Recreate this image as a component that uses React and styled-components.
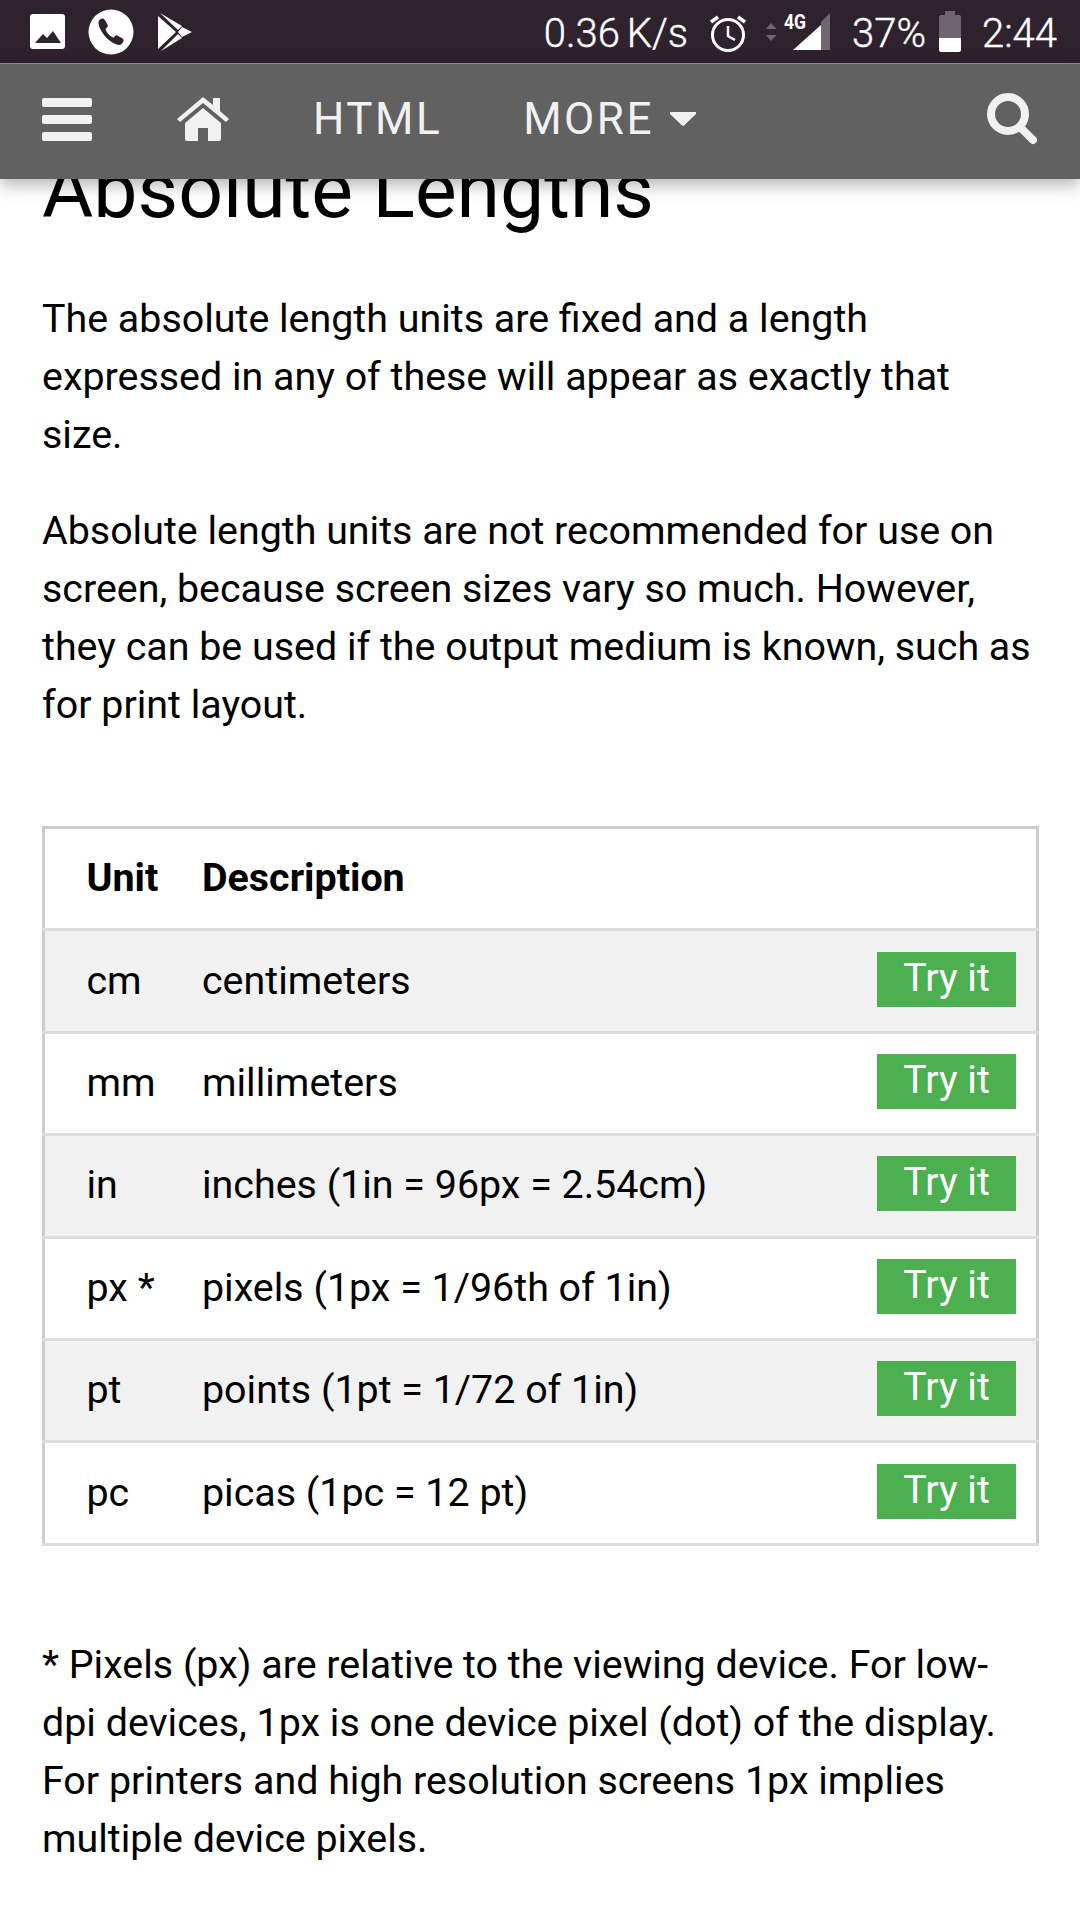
import React from 'react'
import styled, {createGlobalStyle} from 'styled-components'

const GlobalStyle = createGlobalStyle`
html, body {
  margin: 0;
  padding: 0;
  background: #fff;
}
body {
  font-family: Roboto, "Liberation Sans", sans-serif;
  color: #000;
}
`

const Page = styled.div`
width: 1080px;
height: 1920px;
overflow: hidden;
position: relative;
background: #fff;
`

const TopArea = styled.header`
position: absolute;
top: 0;
left: 0;
width: 1080px;
z-index: 2;
`

const StatusBar = styled.div`
height: 63px;
background: #2e222e;
display: flex;
align-items: center;
color: #fff;
padding: 0 23px 0 30px;
box-sizing: border-box;
`

const StatusText = styled.span`
font-size: 40px;
font-weight: 300;
-webkit-text-stroke: 0.4px #fff;
position: relative;
top: 2px;
word-spacing: -3px;
margin-left: ${p => p.$left || 0}px;
white-space: nowrap;
`

const StatusIcon = styled.svg`
display: block;
flex: none;
margin-left: ${p => p.$left || 0}px;
`

const Spacer = styled.div`
flex: 1;
`

const NavBar = styled.nav`
height: 110px;
background: #616161;
border-top: 1px solid #8a8a8a;
box-shadow: 0 6px 16px rgba(0, 0, 0, 0.3);
display: flex;
align-items: center;
color: #f1f1f1;
padding: 0 43px 5px 42px;
`

const NavIcon = styled.svg`
display: block;
flex: none;
margin-left: ${p => p.$left || 0}px;
`

const NavLabel = styled.span`
font-size: 44px;
letter-spacing: 2.5px;
margin-left: ${p => p.$left}px;
`

const Content = styled.main`
padding: 140px 43px 0 42px;
`

const Heading = styled.h2`
font-size: 78.7px;
font-weight: 400;
line-height: 100px;
margin: 0 0 50px;
`

const Paragraph = styled.p`
font-size: 39.4px;
line-height: 58px;
margin: 0 0 38px;
`

const UnitTable = styled.table`
width: 997px;
margin: 92px 0 90px;
border-collapse: collapse;
border: 3px solid #ccc;
font-size: 39.4px;
`

const Row = styled.tr`
height: 102.4px;
background: ${p => p.$shaded ? '#f1f1f1' : '#fff'};
border-bottom: 3px solid #ddd;
`

const HeadCell = styled.th`
text-align: left;
font-weight: 700;
padding: 0 0 2px;
padding-left: ${p => p.$first ? 41.5 : 0}px;
width: ${p => p.$width || 'auto'};
`

const Cell = styled.td`
padding: 0 0 2px;
padding-left: ${p => p.$first ? 41.5 : 0}px;
`

const ButtonCell = styled.td`
padding: 0 20px 0 0;
text-align: right;
`

const TryButton = styled.a`
display: inline-block;
vertical-align: middle;
width: 139px;
height: 55px;
margin-bottom: 4px;
line-height: 52px;
text-align: center;
background: #4caf50;
color: #fff;
`

const units = [
  ['cm', 'centimeters'],
  ['mm', 'millimeters'],
  ['in', 'inches (1in = 96px = 2.54cm)'],
  ['px *', 'pixels (1px = 1/96th of 1in)'],
  ['pt', 'points (1pt = 1/72 of 1in)'],
  ['pc', 'picas (1pc = 12 pt)'],
]

function App() {
  return (
    <Page>
      <GlobalStyle/>
      <TopArea>
        <StatusBar>
          <StatusIcon width="35" height="35" viewBox="0 0 35 35">
            <path fill="#fff" fillRule="evenodd" d="M3 0h29a3 3 0 0 1 3 3v29a3 3 0 0 1-3 3H3a3 3 0 0 1-3-3V3a3 3 0 0 1 3-3zM5 29l8-9 4 4 6-7 8 12z"/>
          </StatusIcon>
          <StatusIcon $left={23} width="46" height="46" viewBox="0 0 46 46">
            <circle cx="23" cy="23" r="22.500" fill="#fff"/>
            <path fill="#2e222e" d="M11 11.500c1.500-1.500 3.500-2.500 5-1.500 1 .8 3.300 5 3.800 6.300.4 1-.4 2-2.300 3.700.8 3.500 4.500 7.500 8 8.700 1.700-1.900 2.700-2.700 3.800-2.300 1.300.5 5.200 2.800 6 3.800.8 1.300 0 3.300-1.600 4.800-2.500 2.200-7.500.6-13.500-4.500C14 24.800 8.800 15.500 11 11.500z"/>
          </StatusIcon>
          <StatusIcon $left={24} width="35" height="38" viewBox="0 0 35 38">
            <path fill="#fff" d="M0 3l18 16L0 36zM2 0l22 13-4 4zM24 14l10 5-10 5-4-5zM3 38l21-13-4-4z"/>
          </StatusIcon>
          <Spacer/>
          <StatusText>0.36 K/s</StatusText>
          <StatusIcon $left={21} width="38" height="40" viewBox="0 0 38 40">
            <circle cx="19" cy="23" r="15.500" fill="none" stroke="#fff" strokeWidth="3"/>
            <path fill="none" stroke="#fff" strokeWidth="2.500" d="M19 14v10l7 4"/>
            <path fill="none" stroke="#fff" strokeWidth="3.500" d="M2 10l7-5M36 10l-7-5"/>
          </StatusIcon>
          <StatusIcon $left={19} width="64" height="52" viewBox="0 -7 64 52">
            <path fill="#6f656f" d="M5 10l5.500 6H0zM0 22h10.500L5 28z"/>
            <path fill="#716770" d="M55 9L64 0v37H55z"/>
            <path fill="#fff" d="M27 37L55 12v25z"/>
            <text x="18" y="16" fill="#fff" fontFamily="Roboto" fontWeight="700" fontSize="21" textLength="22" lengthAdjust="spacingAndGlyphs">4G</text>
          </StatusIcon>
          <StatusText $left={22}>37%</StatusText>
          <StatusIcon $left={13} width="22" height="41" viewBox="0 0 22 41">
            <path fill="#6f656f" d="M6 0h10v4h4a2 2 0 0 1 2 2v21H0V6a2 2 0 0 1 2-2h4z"/>
            <path fill="#fff" d="M0 27h22v12a2 2 0 0 1-2 2H2a2 2 0 0 1-2-2z"/>
          </StatusIcon>
          <StatusText $left={21}>2:44</StatusText>
        </StatusBar>
        <NavBar>
          <NavIcon width="50" height="43" viewBox="0 0 50 43">
            <path fill="#f1f1f1" d="M2 0h46a2 2 0 0 1 2 2v5a2 2 0 0 1-2 2H2a2 2 0 0 1-2-2V2a2 2 0 0 1 2-2zM2 17h46a2 2 0 0 1 2 2v5a2 2 0 0 1-2 2H2a2 2 0 0 1-2-2v-5a2 2 0 0 1 2-2zM2 34h46a2 2 0 0 1 2 2v5a2 2 0 0 1-2 2H2a2 2 0 0 1-2-2v-5a2 2 0 0 1 2-2z"/>
          </NavIcon>
          <NavIcon $left={85} width="52" height="44" viewBox="0 0 52 44">
            <path fill="#f1f1f1" d="M26 11L8 26v16a2 2 0 0 0 2 2h11V31h10v13h11a2 2 0 0 0 2-2V26z"/>
            <path fill="#f1f1f1" d="M26 0L0 22l3 3L26 6l23 19 3-3-9-8V1h-7v7z"/>
          </NavIcon>
          <NavLabel $left={84}>HTML</NavLabel>
          <NavLabel $left={81}>MORE</NavLabel>
          <NavIcon $left={16} width="26" height="14" viewBox="0 0 26 14">
            <path fill="#f1f1f1" d="M1 0h24a1 1 0 0 1 1 2L14 13.500a1.500 1.500 0 0 1-2 0L0 2a1 1 0 0 1 1-2z"/>
          </NavIcon>
          <Spacer/>
          <NavIcon width="50" height="52" viewBox="0 0 50 52">
            <circle cx="21" cy="21" r="17" fill="none" stroke="#f1f1f1" strokeWidth="8"/>
            <path fill="none" stroke="#f1f1f1" strokeWidth="8" strokeLinecap="round" d="M33 34l13 13"/>
          </NavIcon>
        </NavBar>
      </TopArea>
      <Content>
        <Heading>Absolute Lengths</Heading>
        <Paragraph>The absolute length units are fixed and a length expressed in any of these will appear as exactly that size.</Paragraph>
        <Paragraph>Absolute length units are not recommended for use on screen, because screen sizes vary so much. However, they can be used if the output medium is known, such as for print layout.</Paragraph>
        <UnitTable>
          <tbody>
            <Row>
              <HeadCell $first $width="115.5px">Unit</HeadCell>
              <HeadCell>Description</HeadCell>
              <HeadCell $width="161px"/>
            </Row>
            {units.map(([unit, description], i) => (
              <Row key={unit} $shaded={i % 2 === 0}>
                <Cell $first>{unit}</Cell>
                <Cell>{description}</Cell>
                <ButtonCell><TryButton>Try it</TryButton></ButtonCell>
              </Row>
            ))}
          </tbody>
        </UnitTable>
        <Paragraph>* Pixels (px) are relative to the viewing device. For low-dpi devices, 1px is one device pixel (dot) of the display. For printers and high resolution screens 1px implies multiple device pixels.</Paragraph>
      </Content>
    </Page>
  )
}

export default App
